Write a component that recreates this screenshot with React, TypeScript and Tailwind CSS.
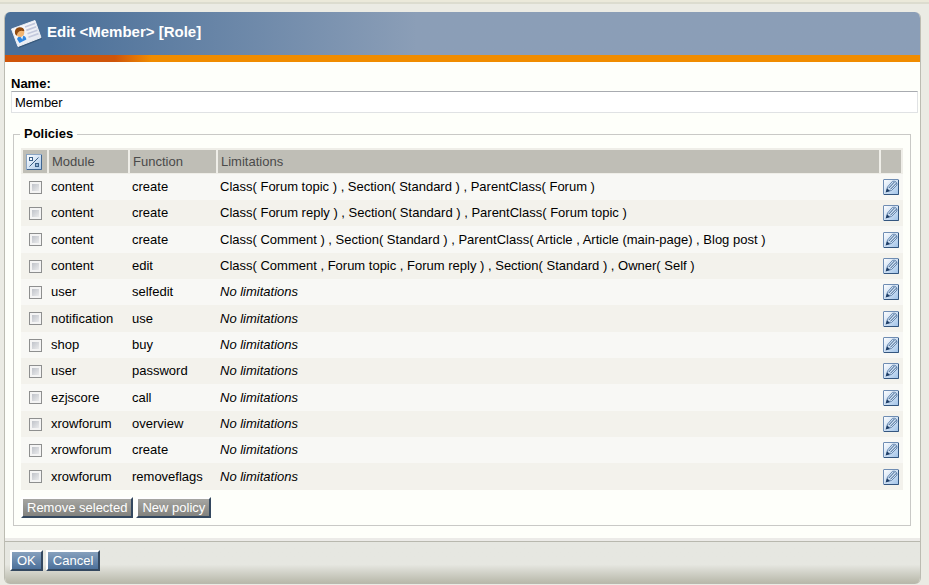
type Policy = { module: string; fn: string; limits?: string };

const policies: Policy[] = [
  { module: "content", fn: "create", limits: "Class( Forum topic ) , Section( Standard ) , ParentClass( Forum )" },
  { module: "content", fn: "create", limits: "Class( Forum reply ) , Section( Standard ) , ParentClass( Forum topic )" },
  { module: "content", fn: "create", limits: "Class( Comment ) , Section( Standard ) , ParentClass( Article , Article (main-page) , Blog post )" },
  { module: "content", fn: "edit", limits: "Class( Comment , Forum topic , Forum reply ) , Section( Standard ) , Owner( Self )" },
  { module: "user", fn: "selfedit" },
  { module: "notification", fn: "use" },
  { module: "shop", fn: "buy" },
  { module: "user", fn: "password" },
  { module: "ezjscore", fn: "call" },
  { module: "xrowforum", fn: "overview" },
  { module: "xrowforum", fn: "create" },
  { module: "xrowforum", fn: "removeflags" },
];

function RoleIcon() {
  return (
    <svg width="32" height="32" viewBox="0 0 32 32" aria-hidden="true">
      <defs>
        <linearGradient id="card" x1="0" y1="0" x2="1" y2="1">
          <stop offset="0" stopColor="#ffffff" />
          <stop offset="1" stopColor="#dfe3ee" />
        </linearGradient>
      </defs>
      <path d="M2 12 L25 4 L31 21 L8 30 Z" fill="#24415f" opacity="0.5" />
      <path d="M0.5 11 L24 2.5 L30 19.5 L7 28.5 Z" fill="url(#card)" stroke="#eceef4" strokeWidth="1" strokeLinejoin="round" />
      <path d="M14 9 L24 5.4 M15.3 12.4 L25.2 8.8 M16.5 15.8 L26.4 12.2 M17.5 19.2 L27.5 15.6" stroke="#c3c8dc" strokeWidth="1.7" />
      <path d="M6 21 Q7 18 10.5 17.5 Q14.8 17.3 15.4 21.5 L8.5 25 Z" fill="#2f86e0" />
      <path d="M9 18 L11.3 21.5 L12.3 17.5 Z" fill="#e8f3ff" />
      <circle cx="9" cy="14.6" r="4.3" fill="#f2b572" />
      <path d="M4 15.5 Q3 10.5 8 9.3 Q13 8.8 13.4 13.2 Q10 12.4 8.4 13.2 Q6.5 14 5.6 17.8 Q4.4 17 4 15.5 Z" fill="#8f4a10" />
    </svg>
  );
}

function InvertIcon() {
  return (
    <svg className="block" width="16" height="16" viewBox="0 0 16 16" aria-hidden="true">
      <defs>
        <linearGradient id="tile" x1="0" y1="0" x2="1" y2="1">
          <stop offset="0" stopColor="#ffffff" />
          <stop offset="1" stopColor="#a9c8ea" />
        </linearGradient>
      </defs>
      <rect x="0.5" y="0.5" width="15" height="15" fill="url(#tile)" stroke="#8aa5c4" />
      <path d="M15.5 1 V15.5 H1" fill="none" stroke="#3f6590" />
      <rect x="3.5" y="3.5" width="3" height="3" fill="#f4f9ff" stroke="#3b6088" />
      <rect x="9.5" y="9.5" width="3" height="3" fill="#8fb2d8" stroke="#3b6088" />
      <path d="M3.5 12.5 L12.5 3.5" stroke="#3b6088" />
    </svg>
  );
}

function EditIcon() {
  return (
    <svg className="block" width="16" height="16" viewBox="0 0 16 16" aria-hidden="true">
      <defs>
        <linearGradient id="edit" x1="0" y1="0" x2="1" y2="1">
          <stop offset="0" stopColor="#ffffff" />
          <stop offset="1" stopColor="#9fc2e8" />
        </linearGradient>
      </defs>
      <rect x="0.5" y="0.5" width="15" height="15" rx="0.5" fill="url(#edit)" stroke="#6f8db3" />
      <path d="M15.5 1 V15.5 H1" fill="none" stroke="#34567f" />
      <path d="M3.5 12.5 L4.5 8 L9.5 2.3 Q14 1.5 14 6 L8.5 11.5 Z" fill="#cfe1f4" stroke="#5d80a9" strokeWidth="0.9" />
      <path d="M5.8 9 L11.6 2.8 M7.3 10.4 L13.4 4.2" stroke="#3b608c" strokeWidth="1" />
      <path d="M2.6 13.4 L4 9.2 L7 11.9 Z" fill="#1d3d66" />
    </svg>
  );
}

const buttonBase = "h-[21px] border-2 border-t-white border-l-white border-r-[#34485f] border-b-[#34485f] text-[13px] leading-4 text-white";
const greyButton = buttonBase + " px-1 bg-linear-to-b from-[#a6a6a2] to-[#82827e]";
const blueButton = buttonBase + " px-[5px] bg-linear-to-b from-[#86a0bd] to-[#4c709a]";
const th = "border-b border-l-2 border-[#efeee8] bg-[#bfbeb6] bg-clip-padding px-[3px] text-left font-normal text-[#4a4a4a]";

export default function App() {
  return (
    <div className="bg-[#ebebe4] pb-px font-['Liberation_Sans',Arial,sans-serif] text-[13px] leading-4 text-black">
      <div className="h-1 border-b-2 border-[#dcdccf] bg-[#ebe9da]" />
      <form
        className="mt-2 mr-2 ml-1 overflow-hidden rounded-md border-x border-[#bcbcb2] bg-[#fefffa]"
        onSubmit={(e) => e.preventDefault()}
      >
        <header className="flex h-[43px] items-center bg-linear-to-r from-[#4b7099] from-5% to-[#8b9eb7] to-45% pl-[6px]">
          <RoleIcon />
          <h1 className="ml-1 pb-1 text-[15px] leading-5 font-bold text-white">Edit &lt;Member&gt; [Role]</h1>
        </header>
        <div className="h-[7px] bg-linear-to-r from-[#cf5509] from-12% to-[#f08c00] to-16%" />

        <div className="pt-[15px] pr-[2px] pb-3 pl-[6px]">
          <label htmlFor="name" className="block leading-[14px] font-bold">Name:</label>
          <input
            id="name"
            defaultValue="Member"
            className="block h-[22px] w-full border border-[#e0e2e4] border-t-[#a8abb0] bg-white px-[3px] outline-none"
          />

          <fieldset className="mt-[13px] mr-[7px] ml-[2px] border border-[#c9c9c6] px-[7px] pb-[7px]">
            <legend className="-ml-px px-1 font-bold">Policies</legend>
            <table className="mt-[6px] w-full table-fixed border-separate border-spacing-0 border-t-2 border-[#efeee8]">
              <colgroup>
                <col className="w-[26px]" />
                <col className="w-[81px]" />
                <col className="w-[88px]" />
                <col />
                <col className="w-[24px]" />
              </colgroup>
              <thead>
                <tr className="h-6">
                  <th className={th}>
                    <button type="button" aria-label="Invert selection" className="block">
                      <InvertIcon />
                    </button>
                  </th>
                  <th className={th}>Module</th>
                  <th className={th}>Function</th>
                  <th className={th}>Limitations</th>
                  <th className={th + " border-r-2"} aria-label="Edit" />
                </tr>
              </thead>
              <tbody>
                {policies.map((p, i) => (
                  <tr key={i} className="h-[26px] bg-[#f8f8f5] even:bg-[#f3f2ec] nth-[3n]:h-[27px]">
                    <td className="pl-2">
                      <input
                        type="checkbox"
                        aria-label={"Select " + p.module + "/" + p.fn}
                        className="block size-[13px] appearance-none border border-[#8e8f8f] bg-linear-to-br from-[#b4b8c0] to-[#f6f6f6] shadow-[inset_0_0_0_2px_#f4f4f4] checked:from-[#395f8c]"
                      />
                    </td>
                    <td className="pl-1">{p.module}</td>
                    <td className="pl-1">{p.fn}</td>
                    <td className="pl-1">{p.limits ?? <i>No limitations</i>}</td>
                    <td className="pl-1">
                      <button type="button" aria-label={"Edit " + p.module + "/" + p.fn} className="block">
                        <EditIcon />
                      </button>
                    </td>
                  </tr>
                ))}
              </tbody>
            </table>
            <div className="mt-[7px] flex gap-[3px]">
              <button type="button" className={greyButton}>Remove selected</button>
              <button type="button" className={greyButton}>New policy</button>
            </div>
          </fieldset>
        </div>

        <footer className="border-t-[3px] border-[#ecebe8]">
          <div className="flex h-[43px] gap-[3px] border-t border-b border-[#b8b8ae] bg-linear-to-b from-[#e6e7e1] from-55% to-[#b8b8aa] pt-2 pl-[5px]">
            <button type="submit" className={blueButton}>OK</button>
            <button type="button" className={blueButton}>Cancel</button>
          </div>
        </footer>
      </form>
    </div>
  );
}
